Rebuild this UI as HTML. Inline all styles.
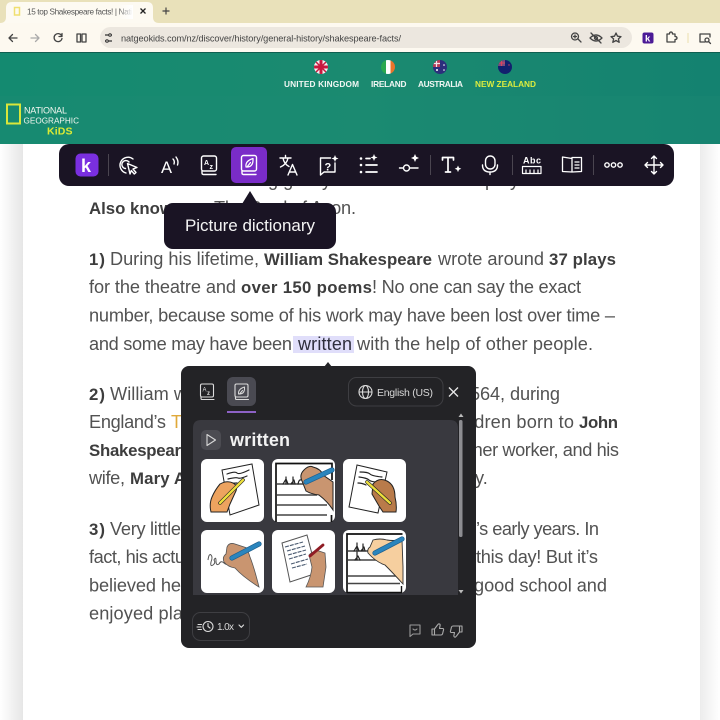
<!DOCTYPE html>
<html lang="en"><head><meta charset="utf-8"><title>15 top Shakespeare facts!</title>
<style>
html,body{margin:0;padding:0;width:720px;height:720px;overflow:hidden;background:#fff}
svg{display:block;filter:blur(.3px)}
text{font-family:"Liberation Sans",sans-serif}
.b{font-size:18.2px;fill:#525252}
.s{font-size:16.8px;fill:#3d3d3d;font-weight:700}
.h{font-size:8.3px;fill:#f2f7f4;font-weight:700}
.i{fill:none;stroke:#fff;stroke-width:1.4;stroke-linecap:round;stroke-linejoin:round}
.n{fill:none;stroke:#444;stroke-width:1.3;stroke-linecap:round;stroke-linejoin:round}
.p{fill:none;stroke:#dcdcdc;stroke-width:1.1;stroke-linecap:round;stroke-linejoin:round}
.k{fill:none;stroke:#222;stroke-width:1.2;stroke-linecap:round;stroke-linejoin:round}
</style></head><body>
<svg width="720" height="720" viewBox="0 0 720 720" xmlns="http://www.w3.org/2000/svg">
<defs>
<linearGradient id="hd" x1="0" y1="0" x2="1" y2="0"><stop offset="0" stop-color="#148a70"/><stop offset=".5" stop-color="#1b8a70"/><stop offset="1" stop-color="#148270"/></linearGradient>
<linearGradient id="ls" x1="0" x2="1"><stop offset="0" stop-color="#fff"/><stop offset="1" stop-color="#e6e6e6"/></linearGradient>
<linearGradient id="rs" x1="0" x2="1"><stop offset="0" stop-color="#ececec"/><stop offset="1" stop-color="#fff"/></linearGradient>
<linearGradient id="fd" x1="0" x2="1"><stop offset="0" stop-color="#fff" stop-opacity="0"/><stop offset="1" stop-color="#fff"/></linearGradient>
<clipPath id="c1"><circle cx="321" cy="67" r="7"/></clipPath>
<clipPath id="c2"><circle cx="388" cy="67" r="7"/></clipPath>
<clipPath id="c3"><circle cx="440" cy="67" r="7"/></clipPath>
<clipPath id="c4"><circle cx="505" cy="67" r="7"/></clipPath>
</defs>

<!-- page -->
<rect width="720" height="720" fill="#fff"/>
<rect x="0" y="144" width="23" height="576" fill="url(#ls)"/>
<rect x="700" y="144" width="20" height="576" fill="url(#rs)"/>

<!-- browser tab strip -->
<rect width="720" height="23" fill="#e9e1ba"/>
<path d="M0 23q6 0 6-6V8q0-6 6-6h135q6 0 6 6v9q0 6 6 6z" fill="#fdfaf2"/>
<rect x="14.500" y="7.500" width="5" height="7.500" fill="none" stroke="#f0df70" stroke-width="1.500"/>
<text x="27" y="14.500" font-size="8.200" fill="#555" textLength="105">15 top Shakespeare facts! | Nati</text>
<rect x="118" y="5" width="15" height="14" fill="url(#fd)"/>
<path d="M140.500 8.500l5 5m0-5l-5 5" stroke="#222" stroke-width="1.300" fill="none"/>
<path d="M166 7.500v7m-3.500-3.500h7" stroke="#444" stroke-width="1.200" fill="none"/>

<!-- browser toolbar -->
<rect y="23" width="720" height="29" fill="#fdf9f0"/>
<path d="M17 38H9m3.500-3.500L9 38l3.500 3.500" class="n"/>
<path d="M31 38h8m-3.500-3.500L39 38l-3.500 3.500" class="n" style="stroke:#aaa"/>
<path d="M61.500 35.500a4 4 0 1 0 .5 3m0-5v3h-3" class="n"/>
<path d="M77 34h3.500v8H77zM82 34h4v8h-4z" class="n"/>
<rect x="100" y="27" width="532" height="21" rx="10.500" fill="#ece7df"/>
<path d="M105 35h4m2 0h1M105 41h1m2 0h4" stroke="#333" stroke-width="1.300" fill="none"/><circle cx="110" cy="35" r="1.300" fill="none" stroke="#333"/><circle cx="107" cy="41" r="1.300" fill="none" stroke="#333"/>
<text x="121" y="41.500" font-size="9.200" fill="#444" textLength="280">natgeokids.com/nz/discover/history/general-history/shakespeare-facts/</text>
<circle cx="575" cy="36.500" r="3.500" class="n"/><path d="M578 39l3 3M573.500 36.500h3M575 35v3" class="n"/>
<path d="M590 38q6-6 12 0q-6 6-12 0zM591 33l10 10" class="n"/><circle cx="596" cy="38" r="1.500" class="n"/>
<path d="M616 33l1.500 3.200 3.500.4-2.600 2.300.8 3.400-3.200-1.800-3.200 1.800.8-3.400-2.600-2.300 3.500-.4z" class="n"/>
<rect x="642.500" y="32.500" width="11" height="11" rx="2" fill="#4b1a96"/>
<text x="645" y="41.500" font-size="9.500" font-weight="700" fill="#fff">k</text>
<path d="M667 34h2.500q0-2 1.500-2t1.500 2h2.500v2.500q2 0 2 1.500t-2 1.500V42h-8z" class="n"/>
<rect x="687.500" y="33" width="1" height="10" fill="#eadfae"/>
<path d="M708 34h-8v8h5M708 34h2v3" class="n"/><circle cx="707" cy="40" r="2" class="n"/><path d="M708.500 41.500l2 2" class="n"/>
<rect y="52" width="720" height="1.500" fill="#0f5f50"/>

<!-- site header -->
<rect y="53" width="720" height="91" fill="url(#hd)"/>
<rect y="96" width="720" height="48" fill="#1e8a72" opacity=".35"/>
<!-- flags -->
<g clip-path="url(#c1)"><rect x="314" y="60" width="14" height="14" fill="#f3eef0"/><path d="M314 60l14 14m0-14l-14 14" stroke="#c8193f" stroke-width="1.500"/><path d="M321 60v14M314 67h14" stroke="#c8193f" stroke-width="3"/></g>
<g clip-path="url(#c2)"><rect x="381" y="60" width="5" height="14" fill="#2aa84f"/><rect x="386" y="60" width="4.500" height="14" fill="#fff"/><rect x="390.500" y="60" width="5" height="14" fill="#e9742b"/></g>
<g clip-path="url(#c3)"><rect x="433" y="60" width="14" height="14" fill="#2c2f7c"/><rect x="433" y="60" width="7" height="7" fill="#b43a55"/><path d="M433 63.500h7M436.500 60v7" stroke="#f2e8ee" stroke-width="1.200"/><circle cx="437" cy="70" r="1" fill="#fff"/><circle cx="444" cy="65" r=".8" fill="#fff"/><circle cx="444" cy="70" r=".8" fill="#fff"/></g>
<g clip-path="url(#c4)"><rect x="498" y="60" width="14" height="14" fill="#12206e"/><rect x="498" y="60" width="7" height="6" fill="#7d4a7e"/><path d="M498 63h7M501.500 60v6" stroke="#d8455f" stroke-width="1.100"/><circle cx="509" cy="65" r=".7" fill="#d8455f"/></g>
<text class="h" x="284" y="87" textLength="75">UNITED KINGDOM</text>
<text class="h" x="371" y="87" textLength="35.500">IRELAND</text>
<text class="h" x="418" y="87" textLength="45">AUSTRALIA</text>
<text class="h" x="475" y="87" textLength="61" style="fill:#dcec3e">NEW ZEALAND</text>
<!-- logo -->
<rect x="7" y="104.500" width="13" height="19" fill="none" stroke="#d9e63a" stroke-width="2"/>
<text x="24" y="113.500" font-size="9" fill="#f3f7f0" textLength="43">NATIONAL</text>
<text x="23.500" y="123.500" font-size="8.200" fill="#f3f7f0" textLength="55.500">GEOGRAPHIC</text>
<text x="47" y="134.500" font-size="10.500" font-weight="700" fill="#dcea35" textLength="25.500">KiDS</text>

<!-- article text -->
<text class="b" x="268" y="186">g g</text><text class="b" x="322" y="186">y</text><text class="b" x="485" y="186">p</text><text class="b" x="510" y="186">y</text>
<text class="s" x="89" y="214">Also known as</text>
<text class="b" x="214" y="214" textLength="142">The Bard of Avon.</text>

<text class="s" x="89" y="265" textLength="16">1)</text>
<text class="b" x="110" y="265" textLength="149">During his lifetime,</text>
<text class="s" x="264" y="265" textLength="168">William Shakespeare</text>
<text class="b" x="438" y="265" textLength="106">wrote around</text>
<text class="s" x="549" y="265" textLength="67">37 plays</text>

<text class="b" x="89" y="293" textLength="147">for the theatre and</text>
<text class="s" x="241" y="293" textLength="131">over 150 poems</text>
<text class="b" x="372" y="293" textLength="209">! No one can say the exact</text>

<text class="b" x="89" y="321.500" textLength="526">number, because some of his work may have been lost over time –</text>

<text class="b" x="89" y="350" textLength="203">and some may have been</text>
<rect x="293" y="336" width="61" height="17" fill="#e0defa"/>
<text x="298" y="350" font-size="18" fill="#2e2e3c" textLength="54">written</text>
<text class="b" x="357" y="350" textLength="236">with the help of other people.</text>

<text class="s" x="89" y="400" textLength="16">2)</text>
<text class="b" x="110" y="400" textLength="77">William w</text>
<text class="b" x="470" y="400" textLength="90">564, during</text>

<text class="b" x="89" y="428" textLength="77">England’s</text>
<text x="171" y="428" font-size="18" fill="#e0a93a">Tu</text>
<text class="b" x="470" y="428" textLength="104">ldren born to</text>
<text class="s" x="579" y="428" textLength="39">John</text>

<text class="s" x="89" y="456" textLength="92">Shakespear</text>
<text class="b" x="468" y="456" textLength="151">ther worker, and his</text>

<text class="b" x="89" y="484" textLength="36">wife,</text>
<text class="s" x="130" y="484" textLength="56">Mary A</text>
<text class="b" x="475" y="484">y.</text>

<text class="s" x="89" y="535" textLength="16">3)</text>
<text class="b" x="110" y="535" textLength="71">Very little</text>
<text class="b" x="476" y="535" textLength="123">’s early years. In</text>

<text class="b" x="89" y="563" textLength="96">fact, his actu</text>
<text class="b" x="476" y="563" textLength="122">this day! But it’s</text>

<text class="b" x="89" y="591.500" textLength="92">believed he</text>
<text class="b" x="474" y="591.500" textLength="133">good school and</text>

<text class="b" x="89" y="619.500" textLength="94">enjoyed pla</text>

<!-- main toolbar -->
<rect x="59" y="144" width="615" height="42" rx="10" fill="#1a1424"/>
<rect x="75.500" y="153.500" width="23" height="23" rx="5" fill="#7a2fe0"/>
<text x="81" y="172" font-size="18" font-weight="700" fill="#fff">k</text>
<rect x="108" y="154" width="1" height="22" fill="#4a4550"/>
<!-- target cursor -->
<path d="M133 159a8 8 0 1 0-7 14" class="i"/><path d="M129 162a4 4 0 1 0-3.500 6.500" class="i"/>
<path d="M127.500 163.500l9.500 4-4 1.500 3 3.500-1.700 1.500-3-3.500-1.300 3.500z" class="i"/>
<!-- A)) -->
<text x="161" y="173" font-size="16.500" fill="#fff">A</text>
<path d="M173 159q2 2 1 5M176 157q3 4 1.500 8" class="i"/>
<!-- Az book -->
<rect x="201.500" y="156" width="15" height="15" rx="2" class="i"/><path d="M202 171v2q0 1.500 1.500 1.500H216" class="i"/>
<text x="204" y="165" font-size="7" font-weight="700" fill="#fff">A</text><text x="209.500" y="169" font-size="7" font-weight="700" fill="#fff">z</text>
<!-- active picture dict -->
<rect x="231" y="147" width="36" height="36" rx="5" fill="#7a2cc8"/>
<rect x="241.500" y="155.500" width="15" height="15.500" rx="2" class="i"/><path d="M242 171v2q0 1.500 1.500 1.500H256" class="i"/>
<path d="M246 167q-1-6 7-8.500q.5 8-5.500 8.500zM247 167l3.500-4.500" class="i" style="stroke-width:1.200"/>
<!-- translate -->
<path d="M280 158h11M285.500 155.500v2.500M283 158q1 6 6 8.500M288 158q-1 6-7.500 9" class="i"/>
<path d="M288 175l4.500-10.500L297 175M289.500 172h6" class="i"/>
<!-- question -->
<path d="M335 163v9h-11l-3.500 3v-17h10" class="i"/>
<text x="324.500" y="170.500" font-size="11" font-weight="700" fill="#fff">?</text>
<path d="M335 155l1 2.500 2.500 1-2.500 1-1 2.500-1-2.500-2.500-1 2.500-1z" fill="#fff"/>
<!-- list -->
<circle cx="361" cy="158.500" r="1.300" fill="#fff"/><circle cx="361" cy="165" r="1.300" fill="#fff"/><circle cx="361" cy="172" r="1.300" fill="#fff"/>
<path d="M366 158.500h4M366 165h11M366 172h11" class="i" style="stroke-width:1.700"/>
<path d="M374 154l1 2.500 2.500 1-2.500 1-1 2.500-1-2.500-2.500-1 2.500-1z" fill="#fff"/>
<!-- slider -->
<path d="M399.500 168h3.500M410 168h8" class="i"/><circle cx="406.500" cy="168" r="3" class="i"/>
<path d="M415 154l1.200 2.800 2.800 1.200-2.800 1.200-1.200 2.800-1.200-2.800-2.800-1.200 2.800-1.200z" fill="#fff"/>
<rect x="430" y="155" width="1" height="20" fill="#4a4550"/>
<!-- T+ -->
<path d="M442.500 160v-2.500h11v2.500M448 157.500V172M445.500 172h5" class="i" style="stroke-width:1.700"/>
<path d="M458 165.500l1 2.300 2.300 1-2.300 1-1 2.300-1-2.300-2.300-1 2.300-1z" fill="#fff"/>
<!-- mic -->
<rect x="485.500" y="156" width="9.500" height="13" rx="4.750" class="i"/><path d="M482.500 165q0 7 7.500 7t7.500-7M490 172v2.500" class="i"/>
<rect x="512" y="155" width="1" height="20" fill="#4a4550"/>
<!-- Abc -->
<text x="523" y="163.500" font-size="9" font-weight="700" fill="#fff" textLength="18">Abc</text>
<path d="M522.500 166.500h18.500v7h-18.500zM526 170v3M530 170v3M534 170v3M538 170v3" class="i" style="stroke-width:1.200"/>
<!-- book -->
<path d="M572 158.500l-9.500-1.500v14.500l9.500.5 9.500-.5V157.500h-9.500zM572 158.500V172M575 162h4M575 165h4M575 168h4" class="i" style="stroke-width:1.300"/>
<rect x="593" y="155" width="1" height="20" fill="#4a4550"/>
<!-- ooo -->
<circle cx="607" cy="165" r="2.200" class="i"/><circle cx="613.500" cy="165" r="2.200" class="i"/><circle cx="620" cy="165" r="2.200" class="i"/>
<!-- move -->
<path d="M654 156v18M645 165h18M651.500 158.500l2.500-2.500 2.500 2.500M651.500 171.500l2.500 2.500 2.500-2.500M647.500 162.500L645 165l2.500 2.500M660.500 162.500L663 165l-2.500 2.500" class="i"/>

<!-- tooltip -->
<path d="M242 204l8-13 8 13z" fill="#1a1424"/>
<rect x="164" y="203" width="172" height="46" rx="9" fill="#1a1424"/>
<text x="185" y="231" font-size="17" fill="#f4f4f4" textLength="130">Picture dictionary</text>

<!-- panel -->
<path d="M324 367l4-5 4 5z" fill="#232326"/>
<rect x="181" y="366" width="295" height="282" rx="8" fill="#232326"/>
<!-- tabs -->
<rect x="200.500" y="384" width="13" height="13" rx="1.500" class="p"/><path d="M201 397v1.500q0 1 1 1h12" class="p"/>
<text x="202.500" y="391.500" font-size="6" fill="#ddd">A</text><text x="207" y="395" font-size="6" fill="#ddd" font-weight="700">z</text>
<rect x="227" y="377" width="29" height="29" rx="6" fill="#4a4a52"/>
<rect x="235" y="384" width="13" height="13" rx="1.500" class="p"/><path d="M235.500 397v1.500q0 1 1 1h12" class="p"/>
<path d="M238.500 394q-.5-5 6-7q.5 6.500-4.500 7zM239.500 394l3-3.500" class="p" style="stroke-width:1"/>
<rect x="227" y="411" width="29" height="2" fill="#8d62c6"/>
<!-- language -->
<rect x="348.500" y="377.500" width="94.500" height="28.500" rx="8" fill="#232326" stroke="#3e3e42"/>
<circle cx="365.500" cy="392" r="6.500" class="p"/><ellipse cx="365.500" cy="392" rx="3" ry="6.500" class="p"/><path d="M359 392h13" class="p"/>
<text x="377" y="396" font-size="10.500" fill="#d8d8d8" textLength="56">English (US)</text>
<path d="M449 387.500l9 9m0-9l-9 9" stroke="#e8e8e8" stroke-width="1.300" fill="none"/>
<!-- card -->
<path d="M193 595V428q0-8 8-8h249q8 0 8 8v167z" fill="#39393f"/>
<rect x="459" y="420" width="3.500" height="117" rx="1.500" fill="#8d8d91"/>
<path d="M458.500 417l2.500-3.500 2.500 3.500zM458.500 590l2.500 3.500 2.500-3.500z" fill="#bbb"/>
<rect x="201" y="430" width="20" height="20" rx="5" fill="#4c4c52"/>
<path d="M207 434.500l8.500 5.500-8.500 5.500z" fill="none" stroke="#d8d8d8" stroke-width="1.100" stroke-linejoin="round"/>
<text x="230" y="446" font-size="18" font-weight="700" fill="#f2f2f2" textLength="60">written</text>

<!-- picture cards -->
<rect x="201" y="459" width="63" height="63" rx="6" fill="#fff"/>
<rect x="272" y="459" width="63" height="63" rx="6" fill="#fff"/>
<rect x="343" y="459" width="63" height="63" rx="6" fill="#fff"/>
<rect x="201" y="530" width="63" height="63" rx="6" fill="#fff"/>
<rect x="272" y="530" width="63" height="63" rx="6" fill="#fff"/>
<rect x="343" y="530" width="63" height="63" rx="6" fill="#fff"/>

<!-- image 1 -->
<path d="M222 470l30-6 7 41-29 10z" fill="#fff" stroke="#222" stroke-width="1"/>
<path d="M227 474q8-3 10-1t12-3M228 479q8-2 10-1t9-2M229 484q4-1 8-1" class="k"/>
<path d="M211 512q-2-8 1-15t8-13q7-4 13-1t2 10l-5 11-3 8z" fill="#eda35f" stroke="#222" stroke-width="1"/>
<path d="M220 503l23-23" stroke="#222" stroke-width="3.600" stroke-linecap="round"/>
<path d="M220 503l23-23" stroke="#ecdf3c" stroke-width="2.400" stroke-linecap="round"/>

<!-- image 2 -->
<path d="M276 522V463.500h56V480M331.500 515v7" fill="none" stroke="#111" stroke-width="1.700"/>
<path d="M277 484h30M277 495h40M277 505h50M277 515h50" stroke="#444" stroke-width="1.400"/>
<path d="M286 484v-7m-3 7l3-5 2 5m5 0v-7m-2 7l3-4 1 4m3 0q1-5 3-4" class="k"/>
<path d="M302 481q-3-6 2-11t9-3q8 2 10 8l10 7v28q-5-8-14-15-8-1-13-4z" fill="#c99570" stroke="#222" stroke-width="1"/>
<path d="M306 482l26-12" stroke="#1e5f8e" stroke-width="5.200" stroke-linecap="round"/>
<path d="M306 482l26-12" stroke="#2a85bd" stroke-width="3.800" stroke-linecap="round"/>

<!-- image 3 -->
<path d="M357 465l30 7-9 41-29-6z" fill="#fff" stroke="#222" stroke-width="1"/>
<path d="M360 472q8 0 10 2t12 3M359 477q8 1 10 3t9 2M358 483q4 0 8 2" class="k"/>
<path d="M373 484q6-7 14-3t8 16q2 8 1 15h-13l-4-6-7-12z" fill="#b97b4a" stroke="#222" stroke-width="1"/>
<path d="M367 482l23 21" stroke="#222" stroke-width="3.600" stroke-linecap="round"/>
<path d="M367 482l23 21" stroke="#ecdf3c" stroke-width="2.400" stroke-linecap="round"/>

<!-- image 4 -->
<path d="M208 560q1-7 3-5t0 7q-1 5 2 3t1-5q2-4 2 1t3 3q2-4 5-1t6-1" fill="none" stroke="#555" stroke-width="1"/>
<path d="M224 562q-2-5 2-8l1-7q2-5 8-3t12 4l3 9q4 10 9 30-16-10-24-19-7-1-11-6z" fill="#c99570" stroke="#555" stroke-width=".8"/>
<path d="M232 558l27-14" stroke="#1e5f8e" stroke-width="5.200" stroke-linecap="round"/>
<path d="M232 558l27-14" stroke="#2a85bd" stroke-width="3.800" stroke-linecap="round"/>

<!-- image 5 -->
<path d="M282 543l25-8 10 38-27 9z" fill="#fff" stroke="#555" stroke-width="1"/>
<path d="M285 547l18-5M287 551l18-5M288 555l18-5M289 559l17-5M291 564l17-5M292 568l15-4" stroke="#4a5a70" stroke-width="1.100" stroke-dasharray="4 1"/>
<path d="M309 555q5-5 10-4l6 2 1 14-3 20h-17q5-10 6-20z" fill="#c99570" stroke="#555" stroke-width=".8"/>
<path d="M310 556l13-11" stroke="#8f1c24" stroke-width="2.800" stroke-linecap="round"/>

<!-- image 6 -->
<path d="M347 593V534h55.500" fill="none" stroke="#111" stroke-width="1.700"/><path d="M401.500 586v7M347 592.500h55" stroke="#111" stroke-width="1.400" fill="none"/>
<path d="M348 551h24M348 560h32M348 576h52M348 583.500h52" stroke="#444" stroke-width="1.400"/>
<path d="M357 551v-8m-3 8l3-5 2 5m4 0v-7m-2 7l3-4 1 4m-8 9v-8m-2 8l3-4 2 4" class="k"/>
<path d="M368 553q-1-4 2-6l3-7q7-2 14 0 5 1 15 0l1 27v17q-10-11-18-19-9-3-17-12z" fill="#f6cf9f" stroke="#333" stroke-width=".9"/>
<path d="M375 553l27-14" stroke="#1e5f8e" stroke-width="5.200" stroke-linecap="round"/>
<path d="M375 553l27-14" stroke="#2a85bd" stroke-width="3.800" stroke-linecap="round"/>

<!-- footer of panel -->
<rect x="192.500" y="612.500" width="57" height="28" rx="8" fill="#232326" stroke="#3e3e42"/>
<circle cx="208" cy="626.500" r="5" class="p"/><path d="M208 623.500v3l2 1.500M198 624.500h3.500M197 627h4M198 629.500h3.500" class="p"/>
<text x="217" y="630" font-size="10" fill="#d8d8d8" textLength="17">1.0x</text>
<path d="M239 625l2.300 2.300 2.300-2.300" class="p"/>
<path d="M410 625h10v9h-7l-3 2.500z" class="p" style="stroke:#999"/><path d="M413 629q2 2 4 0" class="p" style="stroke:#999"/>
<path d="M432 629h2.500v6H432zM434.500 629l3-4q1-1.500 2-1t.5 2l-.5 2.500h3q1.500 0 1 1.500l-1 4q-.5 1-1.500 1h-6.500" class="p" style="stroke:#aaa"/>
<path d="M459.500 632h2.500v-6h-2.500zM459.500 632l-3 4q-1 1.500-2 1t-.5-2l.5-2.500h-3q-1.500 0-1-1.500l1-4q.5-1 1.500-1h6.500" class="p" style="stroke:#aaa"/>
</svg>
</body></html>
